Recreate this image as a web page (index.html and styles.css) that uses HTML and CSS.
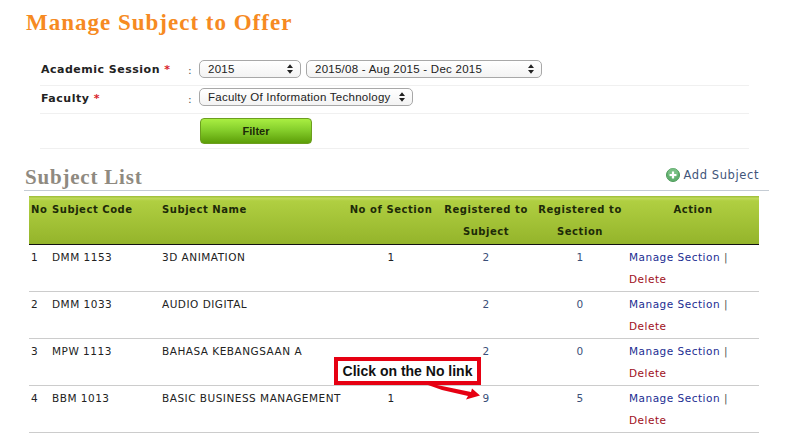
FILE: index.html
```html
<!DOCTYPE html>
<html lang="en">
<head>
<meta charset="utf-8">
<title>Manage Subject to Offer</title>
<link rel="stylesheet" href="styles.css">
</head>
<body>
<main class="page">
  <h1 class="title">Manage Subject to Offer</h1>
  <section class="filter">
    <div class="frow frow-first">
      <div class="flabel">Academic Session <span class="req">*</span></div>
      <div class="fcolon">:</div>
      <div class="fctl">
        <div class="sel sel-year">2015<svg class="updown" viewBox="0 0 7 11"><path d="M3.5 0 7 4.4H0zM3.5 11 0 6.6h7z"/></svg></div>
        <div class="sel sel-sem">2015/08 - Aug 2015 - Dec 2015<svg class="updown" viewBox="0 0 7 11"><path d="M3.5 0 7 4.4H0zM3.5 11 0 6.6h7z"/></svg></div>
      </div>
    </div>
    <div class="frow frow-second">
      <div class="flabel">Faculty <span class="req">*</span></div>
      <div class="fcolon">:</div>
      <div class="fctl">
        <div class="sel sel-fac">Faculty Of Information Technology<svg class="updown" viewBox="0 0 7 11"><path d="M3.5 0 7 4.4H0zM3.5 11 0 6.6h7z"/></svg></div>
      </div>
    </div>
    <div class="frow frow-btn">
      <button class="btn" type="button">Filter</button>
    </div>
  </section>

  <div class="listhead">
    <h2 class="subtitle">Subject List</h2>
    <a class="add">
      <svg class="addicon" viewBox="0 0 14 14"><circle cx="7" cy="7" r="6.5" fill="#62b06f" stroke="#4d9a5a"/><circle cx="7" cy="5" r="5" fill="#8fd09a" opacity=".5"/><path d="M7 3.6v6.8M3.6 7h6.8" stroke="#fff" stroke-width="2.2"/></svg>Add Subject
    </a>
  </div>

  <table class="grid">
    <colgroup>
      <col class="c-no"><col class="c-code"><col class="c-name"><col class="c-sec"><col class="c-reg"><col class="c-reg"><col>
    </colgroup>
    <thead>
      <tr>
        <th>No</th><th>Subject Code</th><th>Subject Name</th>
        <th class="ctr">No of Section</th><th class="ctr">Registered to Subject</th><th class="ctr">Registered to Section</th><th class="ctr">Action</th>
      </tr>
    </thead>
    <tbody>
      <tr><td>1</td><td>DMM 1153</td><td>3D ANIMATION</td><td class="ctr">1</td><td class="ctr num">2</td><td class="ctr num">1</td><td><a class="manage">Manage Section</a> <span class="pipe">|</span> <a class="del">Delete</a></td></tr>
      <tr><td>2</td><td>DMM 1033</td><td>AUDIO DIGITAL</td><td class="ctr"></td><td class="ctr num">2</td><td class="ctr num">0</td><td><a class="manage">Manage Section</a> <span class="pipe">|</span> <a class="del">Delete</a></td></tr>
      <tr><td>3</td><td>MPW 1113</td><td>BAHASA KEBANGSAAN A</td><td class="ctr"></td><td class="ctr num">2</td><td class="ctr num">0</td><td><a class="manage">Manage Section</a> <span class="pipe">|</span> <a class="del">Delete</a></td></tr>
      <tr><td>4</td><td>BBM 1013</td><td>BASIC BUSINESS MANAGEMENT</td><td class="ctr">1</td><td class="ctr num">9</td><td class="ctr num">5</td><td><a class="manage">Manage Section</a> <span class="pipe">|</span> <a class="del">Delete</a></td></tr>
    </tbody>
  </table>
</main>
<div class="callout">Click on the No link</div>
<svg class="arrow" viewBox="0 0 60 30"><path d="M0 1H9L43 8 44 4.500 52 11.500 38 15.500 40 12 14 6z" fill="#e60012"/></svg>
</body>
</html>
```

FILE: styles.css
```css
* { box-sizing: border-box; }
html, body { margin: 0; padding: 0; background: #fff; }
body { position: relative; width: 785px; height: 437px; overflow: hidden; font-family: "DejaVu Sans", sans-serif; font-size: 10.5px; color: #222; }
.page { padding: 10px 16px 0 24px; }
.title { margin: 0 0 0 2px; font-family: "Liberation Serif", serif; font-weight: 700; font-size: 23px; line-height: 26px; color: #f68a22; letter-spacing: 1px; }

.filter { margin: 19px 20px 0 16px; }
.frow { display: grid; grid-template-columns: 148px 11px 1fr; align-items: center; border-bottom: 1px solid #f0f0f0; }
.frow-first { height: 31px; padding-bottom: 3px; }
.frow-first .flabel { padding-top: 2px; }
.frow-second { height: 28px; padding-bottom: 5px; }
.frow-second .flabel { padding-top: 3px; }
.frow-second .fcolon { padding-top: 4px; }
.flabel { font-weight: 700; font-size: 11px; letter-spacing: .5px; color: #222; padding-left: 1px; }
.req { color: #d81e2c; }
.fcolon { color: #555; font-size: 11px; padding-top: 3px; }
.fctl { display: flex; gap: 5px; }
.sel { display: flex; align-items: center; justify-content: space-between; height: 18px; padding: 0 7px 0 8px; border: 1px solid #a8a8a8; border-radius: 5px; background: linear-gradient(#fff, #f3f3f3); font-family: "Liberation Sans", sans-serif; font-size: 11.5px; letter-spacing: .25px; color: #222; }
.sel-year { width: 102px; }
.sel-sem { width: 236px; }
.sel-fac { width: 214px; }
.updown { width: 6px; height: 10px; fill: #222; }
.frow-btn { height: 35px; grid-template-columns: 160px; }
.btn { grid-column: 1; margin-left: 160px; width: 112px; height: 26px; padding: 0; border: 1px solid #6c9e1e; border-radius: 4px; background: linear-gradient(#a9ee42, #86cf2c 45%, #5c9e08); font-family: "Liberation Sans", sans-serif; font-weight: 700; font-size: 11px; color: #1c2a08; }

.listhead { display: flex; justify-content: space-between; align-items: center; height: 28px; margin-top: 14px; padding: 0 10px 0 1px; border-bottom: 1px solid #c5ccd4; }
.subtitle { margin: 1px 0 0; font-family: "Liberation Serif", serif; font-weight: 700; font-size: 21px; line-height: 26px; letter-spacing: .8px; color: #8f8a80; }
.add { display: flex; align-items: center; gap: 3px; font-size: 11.5px; letter-spacing: .6px; color: #41557a; margin-top: -4px; }
.addicon { width: 14px; height: 14px; }

.grid { width: 730px; margin: 5px 0 0 5px; border-collapse: collapse; table-layout: fixed; font-size: 10.5px; letter-spacing: .5px; }
.c-no { width: 21px; }
.c-code { width: 110px; }
.c-name { width: 183px; }
.c-sec { width: 96px; }
.c-reg { width: 94px; }
.grid th { padding: 3px 2px 1px; line-height: 22px; text-align: left; vertical-align: top; font-size: 10px; letter-spacing: .55px; color: #1d2a08; background: linear-gradient(#a3c23d 0, #a3c23d 1px, #c0da5c 2px, #b0cf41 5px, #94b42b 100%); border-bottom: 1px solid #111; white-space: normal; }
.grid th.ctr { text-align: center; }
.grid td { padding: 1px 2px 0; height: 47px; line-height: 22px; vertical-align: top; border-bottom: 1px solid #ccc; color: #222; }
.grid td.ctr { text-align: center; }
.grid td.num { color: #3a4f78; }
.manage { color: #1c2d92; }
.pipe { color: #555; }
.del { color: #a0101c; }

.callout { position: absolute; left: 334px; top: 357px; width: 147px; height: 28px; border: 4px solid #e60012; background: #fff; font-family: "Liberation Sans", sans-serif; font-weight: 700; font-size: 14px; line-height: 20px; text-align: center; color: #111; }
.arrow { position: absolute; left: 428px; top: 384px; width: 60px; height: 30px; }
```
